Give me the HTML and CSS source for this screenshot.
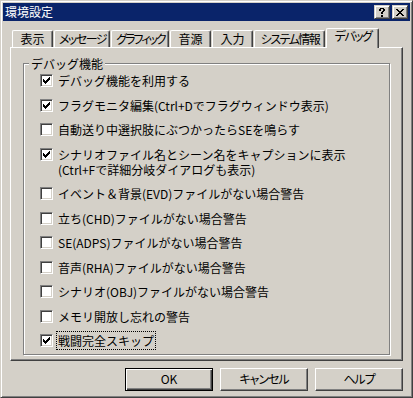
FILE: index.html
```html
<!DOCTYPE html>
<html lang="ja">
<head>
<meta charset="utf-8">
<title>環境設定</title>
<link rel="stylesheet" href="styles.css">
</head>
<body>
<div class="window">
  <div class="caption">
    <span class="caption-title">環境設定</span>
    <div class="caption-buttons">
      <div class="cap-btn">
        <svg class="glyph-help" width="6" height="9" viewBox="0 0 6 9" shape-rendering="crispEdges"><path d="M1 0h4v1H1z M0 1h2v2H0z M4 1h2v2H4z M3 3h2v1H3z M2 4h2v2H2z M2 7h2v2H2z" fill="#000"/></svg>
      </div>
      <div class="cap-btn close">
        <svg class="glyph-close" width="8" height="7" viewBox="0 0 8 7" shape-rendering="crispEdges"><path d="M0 0h2v1H0z M6 0h2v1H6z M1 1h2v1H1z M5 1h2v1H5z M2 2h4v1H2z M3 3h2v1H3z M2 4h4v1H2z M1 5h2v1H1z M5 5h2v1H5z M0 6h2v1H0z M6 6h2v1H6z" fill="#000"/></svg>
      </div>
    </div>
  </div>
  <div class="client">
    <div class="tabs">
      <div class="tab tab-disp">表示</div>
      <div class="tab tab-msg kana">メッセージ</div>
      <div class="tab tab-gfx kana">グラフィック</div>
      <div class="tab tab-snd">音源</div>
      <div class="tab tab-inp">入力</div>
      <div class="tab tab-sys kana">システム情報</div>
      <div class="tab tab-dbg kana active">デバッグ</div>
    </div>
    <div class="panel">
      <div class="group">
        <span class="legend">デバッグ機能</span>
        <ul class="options">
          <li class="option"><span class="cb"><svg width="7" height="7" viewBox="0 0 7 7" shape-rendering="crispEdges"><path d="M0 2h1v3H0z M1 3h1v3H1z M2 4h1v3H2z M3 3h1v3H3z M4 2h1v3H4z M5 1h1v3H5z M6 0h1v3H6z" fill="#000"/></svg></span><span class="label">デバッグ機能を利用する</span></li>
          <li class="option"><span class="cb"><svg width="7" height="7" viewBox="0 0 7 7" shape-rendering="crispEdges"><path d="M0 2h1v3H0z M1 3h1v3H1z M2 4h1v3H2z M3 3h1v3H3z M4 2h1v3H4z M5 1h1v3H5z M6 0h1v3H6z" fill="#000"/></svg></span><span class="label">フラグモニタ編集(Ctrl+Dでフラグウィンドウ表示)</span></li>
          <li class="option"><span class="cb"></span><span class="label">自動送り中選択肢にぶつかったらSEを鳴らす</span></li>
          <li class="option two-line"><span class="cb"><svg width="7" height="7" viewBox="0 0 7 7" shape-rendering="crispEdges"><path d="M0 2h1v3H0z M1 3h1v3H1z M2 4h1v3H2z M3 3h1v3H3z M4 2h1v3H4z M5 1h1v3H5z M6 0h1v3H6z" fill="#000"/></svg></span><span class="label">シナリオファイル名とシーン名をキャプションに表示<br>(Ctrl+Fで詳細分岐ダイアログも表示)</span></li>
          <li class="option"><span class="cb"></span><span class="label">イベント＆背景(EVD)ファイルがない場合警告</span></li>
          <li class="option"><span class="cb"></span><span class="label">立ち(CHD)ファイルがない場合警告</span></li>
          <li class="option"><span class="cb"></span><span class="label">SE(ADPS)ファイルがない場合警告</span></li>
          <li class="option"><span class="cb"></span><span class="label">音声(RHA)ファイルがない場合警告</span></li>
          <li class="option"><span class="cb"></span><span class="label">シナリオ(OBJ)ファイルがない場合警告</span></li>
          <li class="option"><span class="cb"></span><span class="label">メモリ開放し忘れの警告</span></li>
          <li class="option"><span class="cb"><svg width="7" height="7" viewBox="0 0 7 7" shape-rendering="crispEdges"><path d="M0 2h1v3H0z M1 3h1v3H1z M2 4h1v3H2z M3 3h1v3H3z M4 2h1v3H4z M5 1h1v3H5z M6 0h1v3H6z" fill="#000"/></svg></span><span class="label focused">戦闘完全スキップ</span></li>
        </ul>
      </div>
    </div>
    <div class="buttons">
      <div class="btn default">OK</div>
      <div class="btn kana">キャンセル</div>
      <div class="btn kana">ヘルプ</div>
    </div>
  </div>
</div>
</body>
</html>
```

FILE: styles.css
```css
* { box-sizing: border-box; }

body {
  margin: 0;
  background: #D4D0C8;
  font-family: "Noto Sans CJK JP", "Liberation Sans", sans-serif;
  font-size: 12px;
  color: #000;
}

.window {
  width: 413px;
  height: 398px;
  border: 1px solid;
  border-color: #D4D0C8 #404040 #404040 #D4D0C8;
  box-shadow: inset 1px 1px #fff, inset -1px -1px #808080;
  padding: 2px;
  display: flex;
  flex-direction: column;
  background: #D4D0C8;
}

.caption {
  height: 18px;
  flex: none;
  background: #0A246A;
  color: #fff;
  display: flex;
  align-items: center;
  padding: 0 2px 0 2px;
}

.caption-title {
  flex: 1;
  line-height: 18px;
  font-size: 12px;
}

.caption-buttons {
  display: flex;
  gap: 2px;
}

.cap-btn {
  width: 16px;
  height: 14px;
  background: #D4D0C8;
  border: 1px solid;
  border-color: #D4D0C8 #404040 #404040 #D4D0C8;
  box-shadow: inset 1px 1px #fff, inset -1px -1px #808080;
  display: flex;
  align-items: center;
  justify-content: center;
}

.cap-btn svg { display: block; }

.client {
  flex: 1;
  padding: 7px 7px 0 7px;
  display: flex;
  flex-direction: column;
}

.tabs {
  height: 19px;
  display: flex;
  align-items: flex-start;
  gap: 1px;
  padding-left: 2px;
  position: relative;
  z-index: 1;
}

.tab {
  height: 17px;
  margin-top: 2px;
  border-top: 1px solid #fff;
  border-left: 1px solid #fff;
  border-right: 1px solid #404040;
  border-radius: 2px 2px 0 0;
  box-shadow: inset -1px 0 #808080;
  text-align: center;
  line-height: 15px;
  white-space: nowrap;
  background: #D4D0C8;
}

.tab.kana {
  font-feature-settings: "palt" 1;
  letter-spacing: -1.5px;
  text-indent: 1px;
}

.tab.tab-gfx { letter-spacing: -2px; }

.tab.active {
  height: 20px;
  margin-top: 0;
  line-height: 14px;
}

.tab-disp { width: 41px; }
.tab-msg { width: 56px; }
.tab-gfx { width: 58px; }
.tab-snd { width: 41px; }
.tab-inp { width: 41px; }
.tab-sys { width: 71px; }
.tab-dbg { width: 53px; }

.panel {
  height: 314px;
  flex: none;
  border: 1px solid;
  border-color: #fff #404040 #404040 #fff;
  box-shadow: inset -1px -1px #808080;
  padding: 15px 12px 0 12px;
}

.group {
  position: relative;
  height: 292px;
  border: 1px solid #808080;
  box-shadow: inset 1px 1px #fff, 1px 1px #fff;
  padding: 9px 0 0 16px;
}

.legend {
  position: absolute;
  left: 5px;
  top: -8px;
  padding: 0 2px;
  line-height: 15px;
  background: #D4D0C8;
}

.options {
  list-style: none;
  margin: 0;
  padding: 0;
}

.option {
  height: 24.5px;
  display: flex;
  align-items: flex-start;
  line-height: 15px;
}

.option.two-line { height: 39.5px; }

.cb {
  flex: none;
  width: 13px;
  height: 13px;
  margin-top: 1px;
  margin-right: 5px;
  background: #fff;
  border: 1px solid;
  border-color: #808080 #fff #fff #808080;
  box-shadow: inset 1px 1px #404040, inset -1px -1px #D4D0C8;
  padding: 2px;
}

.cb svg { display: block; }

.label { white-space: nowrap; }

.label.focused {
  margin-left: -1px;
  padding: 1px 1px;
  margin-top: -1px;
  outline: 1px dotted #000;
}

.buttons {
  margin-top: 7px;
  display: flex;
  justify-content: flex-end;
  gap: 7px;
}

.btn {
  width: 88px;
  height: 23px;
  border: 1px solid;
  border-color: #fff #404040 #404040 #fff;
  box-shadow: inset -1px -1px #808080;
  text-align: center;
  line-height: 20px;
}

.btn.kana {
  font-feature-settings: "palt" 1;
  letter-spacing: -1px;
}

.btn.default {
  border: 1px solid #000;
  box-shadow: inset 1px 1px #fff, inset -1px -1px #404040, inset -2px -2px #808080;
}
```
